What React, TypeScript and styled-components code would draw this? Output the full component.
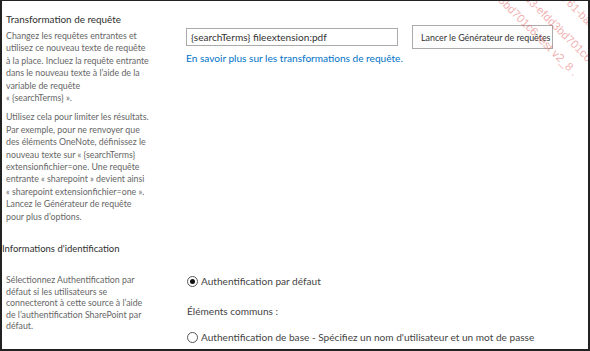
import React from 'react';
import styled, { createGlobalStyle } from 'styled-components';

const GlobalStyle = createGlobalStyle`
  body {
    margin: 0;
    background: #fff;
  }
`;

const Frame = styled.div`
  width: 590px;
  height: 351px;
  box-sizing: border-box;
  border: 2px solid #222;
  border-top-width: 1px;
  position: relative;
  overflow: hidden;
  background: #fff;
  font-family: Lato, "Open Sans", sans-serif;
  color: #444;
`;

const Section = styled.section<{ $top: number }>`
  padding-top: ${p => p.$top}px;
`;

const SectionTitle = styled.div<{ $size: number; $indent: number }>`
  font-size: ${p => p.$size}px;
  line-height: 14px;
  height: 14px;
  padding-left: ${p => p.$indent}px;
  color: #2f2f2f;
  white-space: nowrap;
`;

const Body = styled.div<{ $gap: number }>`
  display: grid;
  grid-template-columns: 180px 1fr;
  padding-left: 4px;
  margin-top: ${p => p.$gap}px;
`;

const Description = styled.div<{ $lh: number; $offset: number }>`
  font-size: 8.8px;
  line-height: ${p => p.$lh}px;
  color: #666;
  white-space: nowrap;
  padding-top: ${p => p.$offset}px;
`;

const Para = styled.p<{ $gap: number }>`
  margin: ${p => p.$gap}px 0 0;
`;

const Controls = styled.div`
  display: flex;
  flex-direction: column;
`;

const ControlRow = styled.div`
  display: flex;
  align-items: center;
  height: 24px;
`;

const QueryInput = styled.input`
  box-sizing: border-box;
  width: 212px;
  height: 18px;
  border: 1px solid #ababab;
  padding: 0 4px;
  font-family: Lato, "Open Sans", sans-serif;
  font-size: 10.1px;
  color: #333;
  background: #fff;
  outline: none;
`;

const BuilderButton = styled.button`
  box-sizing: border-box;
  margin-left: 14px;
  width: 141px;
  height: 24px;
  border: 1px solid #ababab;
  background: #fdfdfd;
  padding: 0 0 0 8px;
  text-align: left;
  font-family: Lato, "Open Sans", sans-serif;
  font-size: 8.9px;
  color: #333;
  white-space: nowrap;
`;

const HelpLink = styled.a`
  margin-top: 3px;
  font-size: 10.1px;
  line-height: 13px;
  color: #0072c6;
  text-decoration: none;
  white-space: nowrap;
`;

const Option = styled.label<{ $gap: number }>`
  display: flex;
  align-items: center;
  gap: 3px;
  height: 14px;
  margin-top: ${p => p.$gap}px;
  padding-left: 1px;
  font-size: 10.1px;
  color: #444;
  white-space: nowrap;
`;

const Radio = styled.span<{ $checked?: boolean }>`
  box-sizing: border-box;
  width: 11px;
  height: 11px;
  border-radius: 50%;
  border: 1px solid #555;
  display: flex;
  align-items: center;
  justify-content: center;
  &::after {
    content: '';
    width: 5px;
    height: 5px;
    border-radius: 50%;
    background: ${p => (p.$checked ? '#111' : 'transparent')};
  }
`;

const GroupLabel = styled.div`
  margin-top: 16px;
  height: 14px;
  line-height: 14px;
  padding-left: 1px;
  font-size: 10.1px;
  color: #444;
`;

const Mark = styled.span<{ $x: number; $y: number }>`
  position: absolute;
  left: ${p => p.$x}px;
  top: ${p => p.$y}px;
  transform-origin: left top;
  transform: rotate(45deg);
  font-family: "Liberation Sans", Arial, sans-serif;
  font-size: 11.5px;
  line-height: 12px;
  color: rgba(225, 95, 95, 0.5);
  white-space: nowrap;
  pointer-events: none;
`;

const intro = [
  'Changez les requêtes entrantes et',
  'utilisez ce nouveau texte de requête',
  'à la place. Incluez la requête entrante',
  'dans le nouveau texte à l’aide de la',
  'variable de requête',
  '« {searchTerms} ».',
];

const usage = [
  'Utilisez cela pour limiter les résultats.',
  'Par exemple, pour ne renvoyer que',
  'des éléments OneNote, définissez le',
  'nouveau texte sur « {searchTerms}',
  'extensionfichier=one. Une requête',
  'entrante « sharepoint » devient ainsi',
  '« sharepoint extensionfichier=one ».',
  'Lancez le Générateur de requête',
  'pour plus d’options.',
];

const auth = [
  'Sélectionnez Authentification par',
  'défaut si les utilisateurs se',
  'connecteront à cette source à l’aide',
  'de l’authentification SharePoint par',
  'défaut.',
];

const watermark = [
  { x: 562, y: -13, text: '4761-bad3-efdd3bd701c6 test v2_8' },
  { x: 520, y: -18, text: 'bad3-efdd3bd701c6 test v2_8' },
  { x: 487, y: -23, text: 'efdd3bd701c6 test v2_8 .' },
];

const Lines = ({ lines }: { lines: string[] }) => (
  <>
    {lines.map((l, i) => (
      <React.Fragment key={i}>
        {l}
        {i < lines.length - 1 && <br />}
      </React.Fragment>
    ))}
  </>
);

export default function App() {
  return (
    <Frame>
      <GlobalStyle />
      <Section $top={11}>
        <SectionTitle $size={9.9} $indent={4}>Transformation de requête</SectionTitle>
        <Body $gap={-1}>
          <Description $lh={12.4} $offset={5}>
            <Para $gap={0}><Lines lines={intro} /></Para>
            <Para $gap={7}><Lines lines={usage} /></Para>
          </Description>
          <Controls>
            <ControlRow>
              <QueryInput readOnly value="{searchTerms} fileextension:pdf" />
              <BuilderButton>Lancer le Générateur de requêtes</BuilderButton>
            </ControlRow>
            <HelpLink href="#">En savoir plus sur les transformations de requête.</HelpLink>
          </Controls>
        </Body>
      </Section>

      <Section $top={19}>
        <SectionTitle $size={9.5} $indent={0}>Informations d'identification</SectionTitle>
        <Body $gap={18}>
          <Description $lh={11.6} $offset={0}>
            <Para $gap={0}><Lines lines={auth} /></Para>
          </Description>
          <Controls>
            <Option $gap={0}><Radio $checked />Authentification par défaut</Option>
            <GroupLabel>Éléments communs :</GroupLabel>
            <Option $gap={12}><Radio />Authentification de base - Spécifiez un nom d'utilisateur et un mot de passe</Option>
          </Controls>
        </Body>
      </Section>

      {watermark.map(w => (
        <Mark key={w.x} $x={w.x} $y={w.y}>{w.text}</Mark>
      ))}
    </Frame>
  );
}
